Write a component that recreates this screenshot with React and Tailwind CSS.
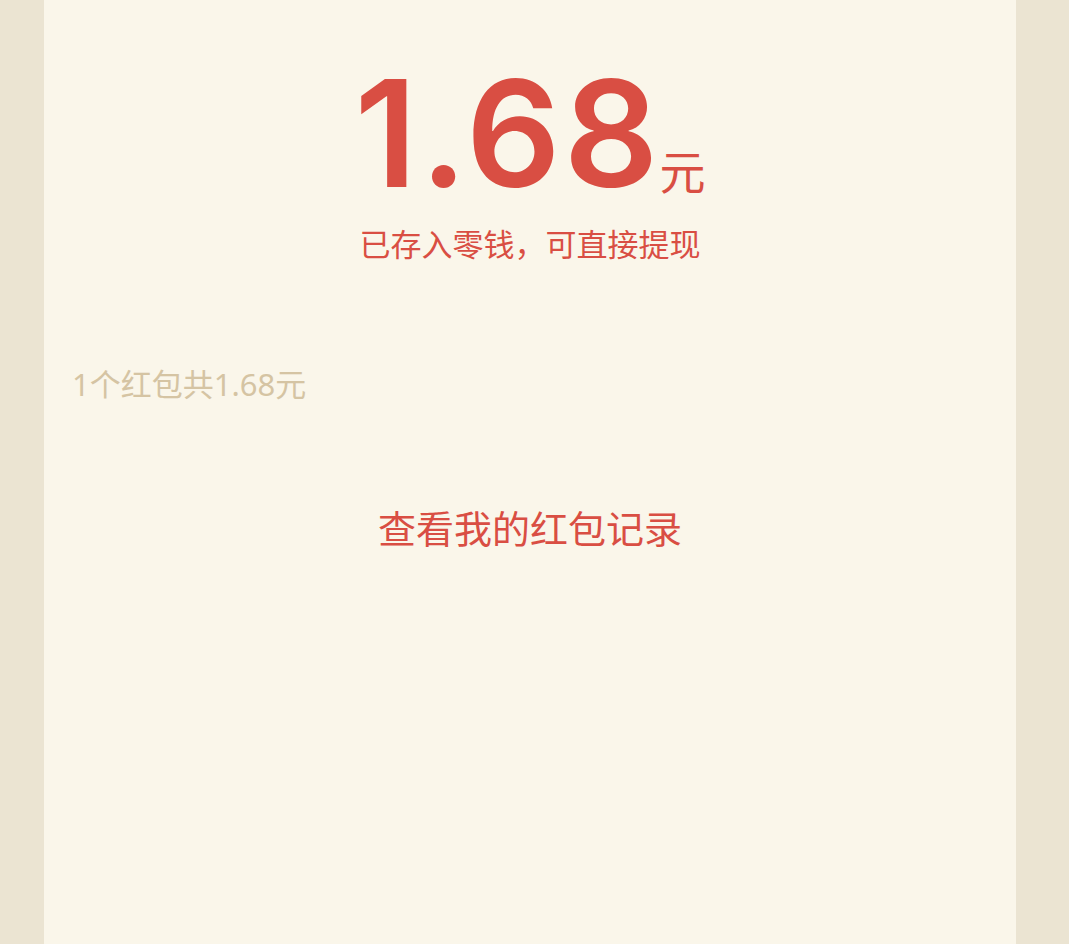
export default function App() {
  return (
    <div className="min-h-screen bg-[#ebe4d2] font-['Noto_Sans','Noto_Sans_CJK_SC',sans-serif]">
      <div className="ml-[44px] w-[972px] min-h-[944px] bg-[#faf6ea] flex flex-col">
        {/* Amount */}
        <div className="flex items-baseline justify-center pt-[60px] text-[#d94e43]">
          <span className="font-['Inter','Noto_Sans',sans-serif] text-[148px] leading-[1] font-semibold tracking-[3px]">1.68</span>
          <span className="text-[46px] leading-[1] -ml-[2px] relative top-[2px]">元</span>
        </div>
        <p className="text-center text-[31px] leading-[1.2] mt-[18px] text-[#d94e43]">
          已存入零钱，可直接提现
        </p>

        {/* Summary */}
        <p className="px-[28px] mt-[103px] text-[31px] leading-[1.2] text-[#d5c4a3]">
          1个红包共1.68元
        </p>

        {/* Records link */}
        <p className="text-center mt-[103px] text-[38px] leading-[1.2] text-[#d94e43]">
          查看我的红包记录
        </p>
      </div>
    </div>
  )
}
